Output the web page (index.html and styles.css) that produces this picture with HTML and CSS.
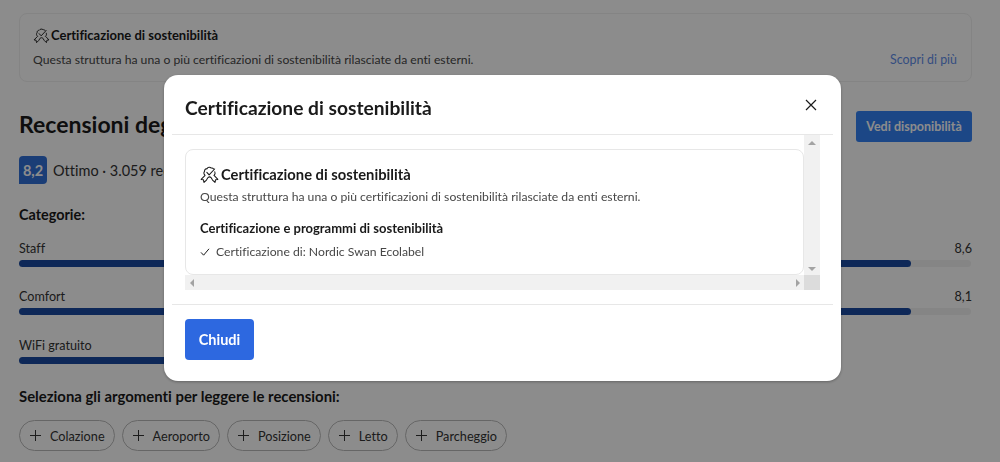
FILE: index.html
```html
<!DOCTYPE html>
<html lang="en">
<head>
    <meta charset="UTF-8">
    <meta name="viewport" content="width=device-width, initial-scale=1.0">
    <title>Certificazione di sostenibilità</title>
    <link rel="stylesheet" href="styles.css">
</head>
<body>

    <svg class="defs" width="0" height="0" aria-hidden="true">
        <symbol id="award" viewBox="0 0 20 20">
            <path d="M5.2 10.8C3.8 9.6 3.8 7.8 4.8 6.8 4.6 5 5.8 3.8 7.4 3.8 8.4 2.2 10.6 2 11.8 3.2 12.8 3 13.8 3.4 14.4 4.2" fill="none" stroke="currentColor" stroke-width="1.1" stroke-linecap="round"/>
            <path d="M15.6 7.2C16.2 8.6 15.9 10 14.8 10.9" fill="none" stroke="currentColor" stroke-width="1.1" stroke-linecap="round"/>
            <path d="M7.2 7.8l2.4 2.6 5.8-6.2" fill="none" stroke="currentColor" stroke-width="1.1" stroke-linecap="round" stroke-linejoin="round"/>
            <path d="M5.4 11L1.2 15.2l2.4.3.6 2.9 2.6-2.6 1.6-2.6" fill="none" stroke="currentColor" stroke-width="1.1" stroke-linejoin="round"/>
            <path d="M14.8 11l4 4.2-2.4.3-.6 2.9-2.6-2.6-1.6-2.6C10.8 12.4 9.4 12.4 8.4 13.2" fill="none" stroke="currentColor" stroke-width="1.1" stroke-linejoin="round"/>
        </symbol>
    </svg>

    <main class="page">
        <section class="notice">
            <h3 class="notice-title"><svg class="award-sm"><use href="#award"/></svg>Certificazione di sostenibilità</h3>
            <div class="notice-row">
                <p>Questa struttura ha una o più certificazioni di sostenibilità rilasciate da enti esterni.</p>
                <a href="#" class="link">Scopri di più</a>
            </div>
        </section>

        <div class="reviews-head">
            <h2>Recensioni degli ospiti</h2>
            <button class="btn-avail">Vedi disponibilità</button>
        </div>

        <div class="score">
            <span class="badge">8,2</span>
            <span>Ottimo · 3.059 recensioni</span>
        </div>

        <h4 class="cat-title">Categorie:</h4>

        <div class="cat">
            <div class="cat-label"><span>Staff</span><span>8,6</span></div>
            <div class="track"><div class="fill" style="width: 93.7%"></div></div>
        </div>
        <div class="cat">
            <div class="cat-label"><span>Comfort</span><span>8,1</span></div>
            <div class="track"><div class="fill" style="width: 93.7%"></div></div>
        </div>
        <div class="cat cat-short">
            <div class="cat-label"><span>WiFi gratuito</span></div>
            <div class="track"><div class="fill" style="width: 100%"></div></div>
        </div>

        <h4 class="topic-title">Seleziona gli argomenti per leggere le recensioni:</h4>
        <div class="chips">
            <span class="chip"><i class="plus"></i>Colazione</span>
            <span class="chip"><i class="plus"></i>Aeroporto</span>
            <span class="chip"><i class="plus"></i>Posizione</span>
            <span class="chip"><i class="plus"></i>Letto</span>
            <span class="chip"><i class="plus"></i>Parcheggio</span>
        </div>
    </main>

    <div class="overlay">
        <div class="modal">
            <header class="modal-head">
                <h2>Certificazione di sostenibilità</h2>
                <svg class="close" viewBox="0 0 12 12"><path d="M1 1l10 10M11 1L1 11" stroke="currentColor" stroke-width="1.2" fill="none"/></svg>
            </header>

            <div class="modal-body">
                <div class="scroller">
                    <div class="cert-card">
                        <h3><svg class="award-lg"><use href="#award"/></svg>Certificazione di sostenibilità</h3>
                        <p>Questa struttura ha una o più certificazioni di sostenibilità rilasciate da enti esterni.</p>
                        <h5>Certificazione e programmi di sostenibilità</h5>
                        <div class="check-row">
                            <svg class="check" viewBox="0 0 10 10"><path d="M1 5.4l2.6 2.8L9 1.8" stroke="currentColor" stroke-width="1" fill="none"/></svg>
                            Certificazione di: Nordic Swan Ecolabel
                        </div>
                    </div>
                    <div class="bar-v"><i class="arrow up"></i><i class="arrow down"></i></div>
                    <div class="bar-h"><i class="arrow left"></i><i class="arrow right"></i></div>
                    <div class="bar-corner"></div>
                </div>
            </div>

            <footer class="modal-foot">
                <button class="btn-close">Chiudi</button>
            </footer>
        </div>
    </div>

</body>
</html>
```

FILE: styles.css
```css
* {
    margin: 0;
    padding: 0;
    box-sizing: border-box;
}
html, body {
    height: 462px;
    overflow: hidden;
}
body {
    font-family: 'Lato', 'Open Sans', sans-serif;
    font-variant-ligatures: none;
    background-color: #fff;
    color: #1a1a1a;
    font-size: 13px;
}
.defs {
    position: absolute;
}
.page {
    padding: 13px 28px 0 19px;
}
.notice {
    height: 69px;
    border: 1px solid #f0f0f0;
    border-radius: 8px;
    padding: 11px 13px 0;
}
.notice-title {
    display: flex;
    align-items: center;
    gap: 1px;
    font-size: 13px;
    line-height: 20px;
    font-weight: 700;
}
.award-sm {
    width: 17px;
    height: 17px;
}
.notice-row {
    display: flex;
    justify-content: space-between;
    align-items: center;
    margin-top: 6px;
    font-size: 12.2px;
    line-height: 18px;
    color: #474747;
}
.link {
    color: #5f8eea;
    font-size: 12.4px;
    text-decoration: none;
    margin-right: 1px;
}
.reviews-head {
    display: flex;
    justify-content: space-between;
    align-items: flex-start;
    margin-top: 29px;
    height: 31px;
}
.reviews-head h2 {
    font-size: 23px;
    line-height: 27px;
    font-weight: 700;
}
.btn-avail {
    width: 116px;
    height: 31px;
    border: none;
    border-radius: 3px;
    background-color: #3381f5;
    color: #fff;
    font-family: inherit;
    font-size: 12.5px;
    font-weight: 700;
}
.score {
    display: flex;
    align-items: center;
    gap: 6px;
    margin-top: 14px;
    font-size: 14.5px;
    color: #333;
}
.badge {
    width: 28px;
    height: 28px;
    display: flex;
    align-items: center;
    justify-content: center;
    border-radius: 4px 4px 4px 0;
    background-color: #3070d8;
    color: #fff;
    font-weight: 700;
}
.cat-title {
    margin-top: 21px;
    font-size: 14.4px;
    line-height: 20px;
    font-weight: 700;
}
.cat {
    margin-top: 15px;
}
.cat + .cat {
    margin-top: 21.4px;
}
.cat-label {
    display: flex;
    justify-content: space-between;
    font-size: 12.6px;
    line-height: 17px;
    color: #333;
}
.track {
    height: 7px;
    margin: 3px 1px 0 0;
    border-radius: 4px;
    background-color: #f2f2f2;
}
.fill {
    height: 100%;
    border-radius: 4px;
    background-color: #1a4aa0;
}
.cat-short {
    width: 640px;
}
.topic-title {
    margin-top: 22.5px;
    font-size: 14.9px;
    line-height: 20px;
    font-weight: 700;
}
.chips {
    display: flex;
    gap: 7px;
    margin-top: 14px;
}
.chip {
    display: flex;
    align-items: center;
    gap: 9px;
    height: 31px;
    padding: 0 9px 0 10px;
    border: 1px solid #bbb;
    border-radius: 16px;
    font-size: 12.7px;
    color: #333;
}
.plus {
    width: 11px;
    height: 11px;
    background: linear-gradient(#333, #333) center / 11px 1px no-repeat,
                linear-gradient(#333, #333) center / 1px 11px no-repeat;
}
.overlay {
    position: fixed;
    inset: 0;
    background-color: rgba(0, 0, 0, 0.45);
}
.modal {
    position: absolute;
    top: 75px;
    left: 164px;
    width: 677px;
    height: 306px;
    display: flex;
    flex-direction: column;
    padding: 0 8px;
    border-radius: 14px;
    background-color: #fff;
    box-shadow: 0 1px 3px rgba(0, 0, 0, 0.3);
}
.modal-head {
    height: 60px;
    display: flex;
    justify-content: space-between;
    align-items: center;
    padding: 6px 16px 6px 13px;
    border-bottom: 1px solid #e7e7e7;
}
.modal-head h2 {
    font-size: 19.2px;
    font-weight: 700;
    margin-top: 6px;
}
.close {
    width: 12px;
    height: 12px;
    color: #1a1a1a;
}
.modal-body {
    height: 170px;
    padding: 0 13px 14px;
    border-bottom: 1px solid #e7e7e7;
}
.scroller {
    height: 155px;
    display: grid;
    grid-template-columns: 619px 16px;
    grid-template-rows: 140px 15px;
}
.cert-card {
    margin-top: 14px;
    padding: 13px 14px 0;
    border: 1px solid #e7e7e7;
    border-radius: 8px;
    background-color: #fff;
}
.cert-card h3 {
    display: flex;
    align-items: center;
    gap: 2px;
    font-size: 14.75px;
    line-height: 22px;
    font-weight: 700;
    color: #1a1a1a;
}
.award-lg {
    width: 19px;
    height: 19px;
}
.cert-card p {
    margin-top: 3px;
    font-size: 12.2px;
    line-height: 18px;
    color: #474747;
}
.cert-card h5 {
    margin-top: 13px;
    font-size: 13px;
    line-height: 18px;
    font-weight: 700;
}
.check-row {
    display: flex;
    align-items: center;
    gap: 6px;
    margin-top: 6px;
    font-size: 12.2px;
    line-height: 18px;
    color: #474747;
}
.check {
    width: 10px;
    height: 10px;
    color: #1a1a1a;
}
.bar-v {
    display: flex;
    flex-direction: column;
    justify-content: space-between;
    align-items: center;
    padding: 6px 0 4px;
    background-color: #f1f1f1;
}
.bar-h {
    display: flex;
    justify-content: space-between;
    align-items: center;
    padding: 0 4px 0 5px;
    background-color: #f1f1f1;
}
.bar-corner {
    background-color: #dcdcdc;
}
.arrow {
    width: 0;
    height: 0;
    border: 4px solid transparent;
}
.arrow.up {
    border-top: 0;
    border-bottom-color: #a3a3a3;
}
.arrow.down {
    border-bottom: 0;
    border-top-color: #a3a3a3;
}
.arrow.left {
    border-left: 0;
    border-right-color: #a3a3a3;
}
.arrow.right {
    border-right: 0;
    border-left-color: #a3a3a3;
}
.modal-foot {
    padding: 14px 13px;
}
.btn-close {
    width: 69px;
    height: 41px;
    border: none;
    border-radius: 4px;
    background-color: #2d68e0;
    color: #fff;
    font-family: inherit;
    font-size: 14.5px;
    font-weight: 700;
}
```
